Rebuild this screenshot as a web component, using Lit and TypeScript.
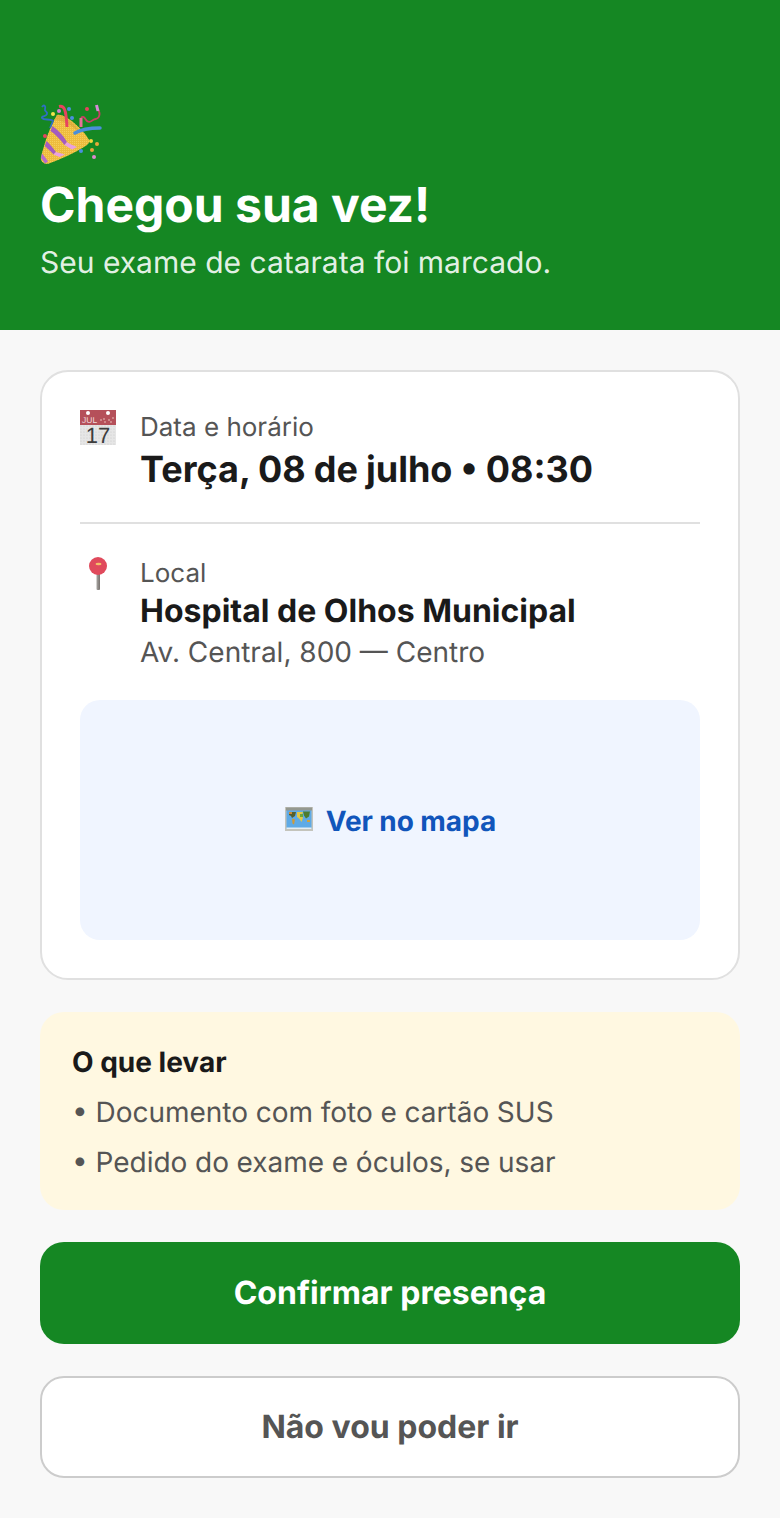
import { LitElement, html, css, svg } from "lit";
import { customElement } from "lit/decorators.js";

const party = svg`<svg viewBox="0 0 62 62" width="62" height="62">
  <defs><pattern id="grain" width="2" height="2" patternUnits="userSpaceOnUse"><rect width="1" height="1" fill="#ffe98a" opacity=".4"/></pattern></defs>
  <path d="M17 12 C24 9 44 27 49 37 C50 40 47 42 44 44 C34 50 22 56 9 60.500 C4 62 0 58 1 54 C5 38 10 24 17 12Z" fill="#eebc3e"/>
  <path d="M17 12 C24 9 44 27 49 37 C50 40 47 42 44 44 C34 50 22 56 9 60.500 C4 62 0 58 1 54 C5 38 10 24 17 12Z" fill="url(#grain)"/>
  <path d="M17 12 C24 10 38 24 41 31 C34 24 26 18 15 17Z" fill="#c99a38" opacity=".45"/>
  <path d="M12.500 23 C18 27 23 32 27 39 L24.500 42 C20 36 15 31 10.500 28Z" fill="#a45cc0"/>
  <path d="M27 39 C30 41 33 42.500 37 44 L32 46.500 L24.500 42Z" fill="#e8a0e0"/>
  <path d="M6.500 38 C10 41 13 45 16 49 L13.500 51.500 C10.500 48 7.500 45.500 4.800 43Z" fill="#a45cc0"/>
  <path d="M16 49 L25 51.500 L19.500 54 L13.500 51.500Z" fill="#e8a0e0"/>
  <path d="M2 50.500 C4 52.500 6 55.500 8 58.500 L5 60.500 C3.500 58 2 56 1 55Z" fill="#b76ad0"/>
  <path d="M19 3.500 C24 2.500 26 5 27 24" fill="none" stroke="#e8435f" stroke-width="3"/>
  <path d="M35 30 C40 27 50 25 60 25" fill="none" stroke="#4a8fd9" stroke-width="3.500" stroke-linecap="round"/>
  <path d="M41 15 C44 12 45 16 47 18 C51 21 52 16 56 16 C60 15 61 9 57 6" fill="none" stroke="#c93f66" stroke-width="1.800"/>
  <path d="M41 24 V15" stroke="#e8709a" stroke-width="3" fill="none"/>
  <path d="M56.500 2 L58 8" stroke="#d88ad8" stroke-width="3" fill="none"/>
  <path d="M2 4 C4 1 6 3 5 6 C4 9 8 8 7 11 C6 14 1 13 2 15 C4 18 10 15 13 18 L10 25" fill="none" stroke="#2f6fc4" stroke-width="1.800"/>
  <g>
    <circle cx="13" cy="11" r="2" fill="#f4e34c"/><circle cx="19" cy="8" r="2" fill="#d77fd0"/><circle cx="29" cy="6" r="2" fill="#4a8fe0"/><circle cx="32" cy="15" r="2" fill="#4a8fe0"/><circle cx="47" cy="6" r="2" fill="#e8435f"/><circle cx="5" cy="33" r="2" fill="#e8435f"/><circle cx="51" cy="38" r="2" fill="#f4d83c"/><circle cx="57" cy="41" r="2" fill="#eaa93a"/><circle cx="41" cy="48" r="2" fill="#4a8fe0"/><circle cx="52" cy="47" r="2" fill="#e8a83a"/><circle cx="54" cy="54" r="2" fill="#dd8ad0"/>
  </g>
</svg>`;

const calendar = svg`<svg viewBox="0 0 38 38" width="38" height="38">
  <defs><pattern id="speck" width="3" height="3" patternUnits="userSpaceOnUse"><circle cx="1" cy="1" r=".6" fill="#c4c4c4"/></pattern></defs>
  <rect x="0" y="15" width="36" height="20" fill="#e6e6e6"/>
  <rect x="0" y="15" width="36" height="20" fill="url(#speck)"/>
  <rect x="0" y="0" width="36" height="15" fill="#b5505a"/>
  <circle cx="8" cy="3" r="2" fill="#fff"/><circle cx="28" cy="3" r="2" fill="#fff"/>
  <text x="2" y="13" font-family="Liberation Sans, sans-serif" font-size="8.500" fill="#f1dcdc">JUL</text>
  <g fill="#d89a9a"><circle cx="21" cy="10" r="1"/><circle cx="25" cy="12" r="1"/><circle cx="29" cy="10" r="1"/><circle cx="33" cy="8" r="1"/><circle cx="24" cy="9" r="1"/><circle cx="31" cy="12" r="1"/></g>
  <text x="18" y="33" text-anchor="middle" font-family="Liberation Sans, sans-serif" font-size="22" fill="#3d3d3d">17</text>
</svg>`;

const pin = svg`<svg viewBox="0 0 38 38" width="38" height="38">
  <defs><linearGradient id="stem" x1="0" x2="1" y1="0" y2="0"><stop offset="0" stop-color="#a8a5a2"/><stop offset="1" stop-color="#77726e"/></linearGradient></defs>
  <rect x="16.500" y="14" width="3.500" height="20" rx="1" fill="url(#stem)"/>
  <circle cx="18" cy="10" r="9" fill="#e04a5c"/>
  <ellipse cx="18.500" cy="8" rx="3" ry="1.300" fill="#f3c06a"/>
</svg>`;

const map = svg`<svg class="map-ic" viewBox="-1 0 30 26" width="30" height="26">
  <rect x="0" y="0" width="28" height="24" fill="#c4c4bc"/>
  <rect x="1.500" y="2" width="25" height="20" fill="#5eaae6"/>
  <rect x="1" y="0.500" width="26" height="3" fill="#949890"/>
  <rect x="1.500" y="20.500" width="25" height="1.500" fill="#e4eef4"/>
  <path d="M4 5h7l-1 4-3 2-1-2-2-1Z" fill="#55602f"/>
  <path d="M4 5h3v2H4Z" fill="#d08a34"/>
  <path d="M7 11.500l3 1-1 5-1.500-1Z" fill="#d09a38"/>
  <path d="M12 5h6l-1 3 1 3-1.500 4-2-3-2.500-2Z" fill="#e0c84a"/>
  <path d="M18 4.500h7l-1 5-3 2-2-3Z" fill="#4d7c30"/>
  <path d="M15 7h3v3h-3Z" fill="#6aa63e"/>
  <rect x="22" y="13" width="3" height="2" fill="#d0a23c"/>
</svg>`;

@customElement("app-root")
export class AppRoot extends LitElement {
  static styles = css`
    :host { display: block; font-family: Inter, "Liberation Sans", sans-serif; background: #f8f8f8; min-height: 1518px; color: #1a1a1a; text-rendering: geometricPrecision; }
    * { box-sizing: border-box; }
    svg { display: block; }
    .hero { background: #158723; height: 330px; padding: 103px 40px 0; color: #fff; }
    .hero-icon { height: 62px; }
    h1 { margin: 9px 0 0; font-size: 48px; line-height: 62px; font-weight: 700; }
    .sub { margin-top: 9px; font-size: 30px; line-height: 36px; color: rgba(255, 255, 255, 0.9); }
    main { padding: 40px 40px 40px; display: flex; flex-direction: column; }
    .card { background: #fff; border: 2px solid #e0e0e0; border-radius: 28px; padding: 38px; }
    .row { display: flex; gap: 22px; }
    .ic { width: 38px; flex: none; }
    .label { font-size: 26px; line-height: 34px; padding-top: 1px; margin-bottom: 1px; color: #555; }
    .value { font-size: 36px; line-height: 46px; font-weight: 700; word-spacing: -0.4px; }
    .place { font-size: 32px; line-height: 38px; font-weight: 700; }
    .addr { font-size: 28px; line-height: 44px; color: #555; }
    hr { border: 0; height: 2px; background: #e0e0e0; margin: 30px 0 32px; }
    .map { margin-top: 26px; height: 240px; padding-top: 2px; background: #f0f5ff; border-radius: 20px; display: flex; align-items: center; justify-content: center; gap: 12px; color: #1155bb; font-size: 28px; font-weight: 700; }
    .map span { word-spacing: -0.3px; }
    .map-ic { margin-bottom: 2px; }
    .tips { margin-top: 32px; background: #fff8e1; border-radius: 24px; padding: 32px 32px 23px; }
    .tips h2 { margin: 0 0 7px; font-size: 28px; line-height: 36px; font-weight: 700; }
    .tips div { font-size: 28px; line-height: 50px; color: #555; word-spacing: -0.2px; }
    button { display: block; width: 100%; height: 102px; padding: 0 0 2px; border-radius: 24px; font: 700 32px Inter, "Liberation Sans", sans-serif; text-rendering: geometricPrecision; }
    .primary { margin-top: 32px; background: #158723; color: #fff; border: 0; }
    .secondary { margin-top: 32px; background: #fff; color: #555; border: 2px solid #ccc; }
  `;

  render() {
    return html`
      <section class="hero">
        <div class="hero-icon">${party}</div>
        <h1>Chegou sua vez!</h1>
        <div class="sub">Seu exame de catarata foi marcado.</div>
      </section>
      <main>
        <div class="card">
          <div class="row">
            <div class="ic">${calendar}</div>
            <div>
              <div class="label">Data e horário</div>
              <div class="value">Terça, 08 de julho • 08:30</div>
            </div>
          </div>
          <hr />
          <div class="row">
            <div class="ic">${pin}</div>
            <div>
              <div class="label">Local</div>
              <div class="place">Hospital de Olhos Municipal</div>
              <div class="addr">Av. Central, 800 — Centro</div>
            </div>
          </div>
          <div class="map">${map}<span>Ver no mapa</span></div>
        </div>
        <div class="tips">
          <h2>O que levar</h2>
          <div>• Documento com foto e cartão SUS</div>
          <div>• Pedido do exame e óculos, se usar</div>
        </div>
        <button class="primary">Confirmar presença</button>
        <button class="secondary">Não vou poder ir</button>
      </main>
    `;
  }
}
